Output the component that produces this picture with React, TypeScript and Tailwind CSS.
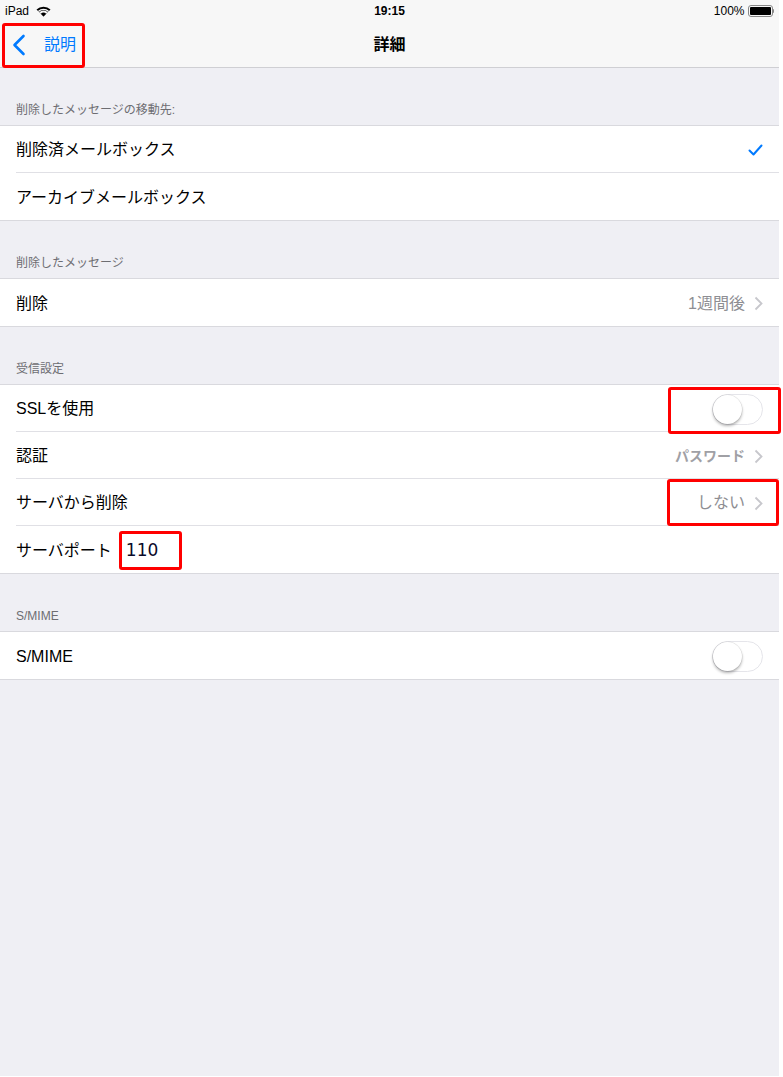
import React from "react";

const font = { fontFamily: '"Liberation Sans", "Noto Sans CJK JP", sans-serif' };

function Chevron() {
  return (
    <svg width="9" height="15" viewBox="0 0 9 15" className="ml-[9px]">
      <path d="M1.5 1.5 L7.5 7.5 L1.5 13.5" fill="none" stroke="#c7c7cc" strokeWidth="1.8" />
    </svg>
  );
}

function Toggle() {
  return (
    <div className="relative w-[51px] h-[31px] rounded-full border border-[#e5e5ea] bg-white">
      <div className="absolute left-0 top-0 w-[29px] h-[29px] rounded-full bg-white shadow-[0_2px_3px_rgba(0,0,0,0.3),0_0_0_0.5px_rgba(0,0,0,0.1)]" />
    </div>
  );
}

function Header({ text }: { text: string }) {
  return (
    <div className="h-[58px] flex items-end px-4 pb-[6px] text-[12px] text-[#6d6d72] border-b border-[#d9d9de]">
      {text}
    </div>
  );
}

function Row({ label, last, children }: { label: React.ReactNode; last?: boolean; children?: React.ReactNode }) {
  return (
    <div className="bg-white pl-4">
      <div className={`h-[47px] flex items-center pr-4 pt-[2px] ${last ? "border-b-0" : "border-b border-[#e0e0e5]"}`}>
        <div className="flex-1 flex items-center text-[16px] text-black">{label}</div>
        {children}
      </div>
    </div>
  );
}

function Group({ children }: { children: React.ReactNode }) {
  return <div className="border-b border-[#d9d9de]">{children}</div>;
}

export default function App() {
  return (
    <div className="relative w-[779px] h-[1076px] bg-[#efeff4]" style={font}>
      <div className="bg-[#f7f7f7] border-b border-[#cfcfd3]">
        <div className="h-[22px] relative flex items-center px-[5px] text-[12px] text-black">
          <span>iPad</span>
          <svg width="15" height="11" viewBox="0 0 15 11" className="ml-[7px]">
            <path d="M7.5 10.5 L0.5 3.6 A10 10 0 0 1 14.5 3.6 Z" fill="#000" />
            <path d="M7.5 10.5 L3.2 6.3 A6 6 0 0 1 11.8 6.3 Z" fill="#f7f7f7" />
            <path d="M7.5 10.5 L4.8 7.8 A3.8 3.8 0 0 1 10.2 7.8 Z" fill="#000" />
            <path d="M7.5 10.5 L1.9 5 A8 8 0 0 1 13.1 5 L12.2 5.9 A6.8 6.8 0 0 0 2.8 5.9 Z" fill="#f7f7f7" />
          </svg>
          <span className="absolute left-1/2 -translate-x-1/2 font-bold">19:15</span>
          <div className="ml-auto flex items-center">
            <span>100%</span>
            <div className="ml-[3px] w-[25px] h-[12px] rounded-[3px] border border-[#888] p-[1px]">
              <div className="w-full h-full bg-black rounded-[1px]" />
            </div>
            <div className="w-[1.5px] h-[4px] bg-[#888] rounded-r" />
          </div>
        </div>
        <div className="h-[45px] relative flex items-center">
          <svg width="14" height="22" viewBox="0 0 14 22" className="ml-[12px]">
            <path d="M11.5 2 L2.5 11 L11.5 20" fill="none" stroke="#007aff" strokeWidth="2.6" strokeLinecap="round" strokeLinejoin="round" />
          </svg>
          <span className="ml-[18px] text-[16px] text-[#007aff]">説明</span>
          <span className="absolute left-1/2 -translate-x-1/2 text-[16px] font-bold text-black">詳細</span>
        </div>
      </div>

      <Header text="削除したメッセージの移動先:" />
      <Group>
        <Row label="削除済メールボックス">
          <svg width="15" height="12" viewBox="0 0 15 12">
            <path d="M1.5 6.5 L5.5 10.5 L13.5 1.5" fill="none" stroke="#007aff" strokeWidth="2" strokeLinecap="round" strokeLinejoin="round" />
          </svg>
        </Row>
        <Row label="アーカイブメールボックス" last />
      </Group>

      <Header text="削除したメッセージ" />
      <Group>
        <Row label="削除" last>
          <span className="text-[16px] text-[#8e8e93]">1週間後</span>
          <Chevron />
        </Row>
      </Group>

      <Header text="受信設定" />
      <Group>
        <Row label="SSLを使用">
          <Toggle />
        </Row>
        <Row label="認証">
          <span className="text-[14px] font-bold text-[#a0a0a5]">パスワード</span>
          <Chevron />
        </Row>
        <Row label="サーバから削除">
          <span className="text-[16px] text-[#8e8e93]">しない</span>
          <Chevron />
        </Row>
        <Row
          label={
            <>
              <span>サーバポート</span>
              <span className="ml-[14px] text-[17px] text-[#0a0a2a]" style={{ fontFamily: '"DejaVu Sans", sans-serif' }}>
                110
              </span>
            </>
          }
          last
        />
      </Group>

      <Header text="S/MIME" />
      <Group>
        <Row label="S/MIME" last>
          <Toggle />
        </Row>
      </Group>

      <div className="absolute left-[2px] top-[23px] w-[83px] h-[45px] border-[3px] border-[#ff0000] rounded-[3px]" />
      <div className="absolute left-[668px] top-[387px] w-[113px] h-[47px] border-[3px] border-[#ff0000] rounded-[3px]" />
      <div className="absolute left-[667px] top-[479px] w-[112px] h-[47px] border-[3px] border-[#ff0000] rounded-[3px]" />
      <div className="absolute left-[119px] top-[531px] w-[63px] h-[39px] border-[3px] border-[#ff0000] rounded-[3px]" />
    </div>
  );
}
